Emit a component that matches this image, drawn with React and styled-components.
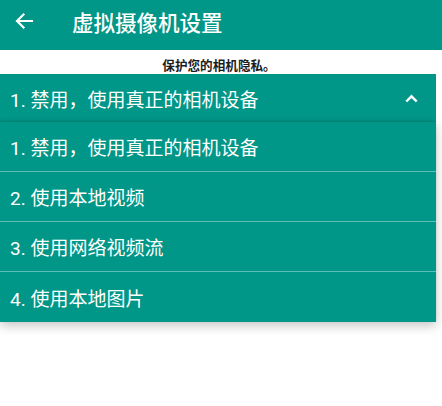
import React from 'react'
import styled, { createGlobalStyle } from 'styled-components'

const GlobalStyle = createGlobalStyle`
  html, body {
    margin: 0;
    padding: 0;
    background: #ffffff;
  }
  body {
    font-family: Roboto, "Noto Sans CJK SC", sans-serif;
  }
`

const Page = styled.div`
  width: 442px;
  min-height: 406px;
  background: #ffffff;
`

const AppBar = styled.header`
  display: flex;
  align-items: center;
  height: 50px;
  padding: 0 0 8px 14px;
  box-sizing: border-box;
  background: #009688;
  color: #ffffff;
`

const BackButton = styled.span`
  display: flex;
  align-items: center;
  width: 20px;
  height: 20px;
  margin-right: 38px;
`

const Title = styled.h1`
  margin: 0;
  font-size: 21.5px;
  font-weight: 500;
  letter-spacing: 0;
`

const Hint = styled.div`
  display: flex;
  align-items: flex-end;
  justify-content: center;
  height: 24px;
  padding-right: 4px;
  font-size: 12.6px;
  font-weight: 700;
  line-height: 16px;
  color: #1d1d1d;
`

const SelectWrap = styled.div`
  position: relative;
  width: 436px;
`

const SelectBar = styled.div`
  display: flex;
  align-items: center;
  justify-content: space-between;
  height: 48px;
  padding: 0 18px 0 10px;
  background: #009688;
  color: #ffffff;
  font-size: 19px;
`

const Menu = styled.ul`
  position: absolute;
  top: 100%;
  left: 0;
  right: 0;
  margin: 0;
  padding: 0;
  list-style: none;
  background: #009688;
  box-shadow: 0 4px 10px rgba(0, 0, 0, 0.22), 0 -1px 2px rgba(0, 0, 0, 0.12);
`

const MenuItem = styled.li`
  display: flex;
  align-items: center;
  height: 50px;
  padding-left: 10px;
  color: #ffffff;
  font-size: 19px;
  box-sizing: border-box;
  border-bottom: ${({ last }) => (last ? 'none' : '1px solid #5cc0b5')};
`

const options = [
  '1. 禁用，使用真正的相机设备',
  '2. 使用本地视频',
  '3. 使用网络视频流',
  '4. 使用本地图片',
]

export default function App() {
  return (
    <Page>
      <GlobalStyle />
      <AppBar>
        <BackButton aria-label="返回">
          <svg width="20" height="20" viewBox="0 0 20 20" fill="none">
            <path
              d="M18 10H3M9.5 3.5L3 10l6.5 6.5"
              stroke="#ffffff"
              strokeWidth="2.2"
              strokeLinecap="square"
            />
          </svg>
        </BackButton>
        <Title>虚拟摄像机设置</Title>
      </AppBar>
      <Hint>保护您的相机隐私。</Hint>
      <SelectWrap>
        <SelectBar>
          <span>{options[0]}</span>
          <svg width="13" height="9" viewBox="0 0 13 9" fill="none">
            <path d="M1.3 7.5L6.5 2.3l5.2 5.2" stroke="#ffffff" strokeWidth="2.4" />
          </svg>
        </SelectBar>
        <Menu>
          {options.map((label, index) => (
            <MenuItem key={label} last={index === options.length - 1}>
              {label}
            </MenuItem>
          ))}
        </Menu>
      </SelectWrap>
    </Page>
  )
}
